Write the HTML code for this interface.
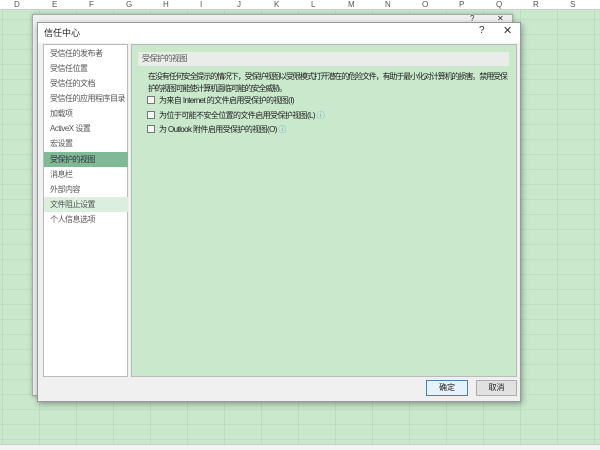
<!DOCTYPE html>
<html><head><meta charset="utf-8"><style>
*{margin:0;padding:0;box-sizing:border-box}
body{width:600px;height:450px;overflow:hidden;position:relative;font-family:"Liberation Sans","Noto Sans CJK SC",sans-serif;font-size:8px;color:#333;
background-color:#c9e8cc;
background-image:linear-gradient(to right,#bddcc0 1px,transparent 1px),linear-gradient(to bottom,#c0dfc3 1px,transparent 1px);
background-size:37px 100%,100% 15px;background-position:2px 0,0 4px}
.hdr{position:absolute;left:0;top:0;width:600px;height:10px;background:#fff;border-bottom:1px solid #ccc}
.hdr span{position:absolute;top:0;font-size:8px;color:#555}
.abs{position:absolute}
.item{position:absolute;left:44px;width:84px;height:15px;line-height:15px;padding-left:6px;font-size:8px;color:#555;white-space:nowrap;letter-spacing:-0.5px}
.cb{position:absolute;left:147px;width:8px;height:8px;border:1px solid #777;background:#f6f6f6}
.lbl{position:absolute;left:159px;font-size:8px;color:#222;white-space:nowrap;letter-spacing:-0.6px}
.btn{position:absolute;top:380px;height:16px;line-height:14px;text-align:center;font-size:8px;color:#222;background:#e1e1e1;border:1px solid #adadad}
.bottom{position:absolute;left:0;top:444px;width:600px;height:6px;background:#f3f3f3;border-top:1px solid #ccc}
</style></head><body>
<div class="hdr">
<span style="left:14px">D</span><span style="left:52px">E</span><span style="left:89px">F</span><span style="left:126px">G</span><span style="left:163px">H</span><span style="left:200px">I</span><span style="left:237px">J</span><span style="left:274px">K</span><span style="left:311px">L</span><span style="left:348px">M</span><span style="left:385px">N</span><span style="left:422px">O</span><span style="left:459px">P</span><span style="left:496px">Q</span><span style="left:533px">R</span><span style="left:570px">S</span>
</div>
<div class="abs" style="left:32px;top:14px;width:481px;height:382px;background:#f0f0f0;border:1px solid #aaa;box-shadow:0 0 4px rgba(0,0,0,.25)"></div>
<div class="abs" style="left:470px;top:14px;font-size:8px">?</div>
<div class="abs" style="left:497px;top:14px;font-size:8px">✕</div>
<div class="abs" style="left:37px;top:22px;width:484px;height:380px;background:#f0f0f0;border:1px solid #999;box-shadow:1px 2px 6px rgba(0,0,0,.35)"></div>
<div class="abs" style="left:38px;top:23px;width:482px;height:20px;background:#fff"></div>
<div class="abs" style="left:44px;top:26px;font-size:9px;color:#222">信任中心</div>
<div class="abs" style="left:479px;top:25px;font-size:10px;color:#333">?</div>
<div class="abs" style="left:503px;top:24px;font-size:11px;color:#333">✕</div>
<div class="abs" style="left:43px;top:44px;width:85px;height:333px;background:#fff;border:1px solid #bbb"></div>
<div class="item" style="top:46px">受信任的发布者</div>
<div class="item" style="top:61px">受信任位置</div>
<div class="item" style="top:76px">受信任的文档</div>
<div class="item" style="top:91px">受信任的应用程序目录</div>
<div class="item" style="top:106px">加载项</div>
<div class="item" style="top:121px">ActiveX 设置</div>
<div class="item" style="top:136px">宏设置</div>
<div class="item" style="top:152px;background:#7fb995;color:#334">受保护的视图</div>
<div class="item" style="top:167px">消息栏</div>
<div class="item" style="top:182px">外部内容</div>
<div class="item" style="top:197px;background:#dcefdf">文件阻止设置</div>
<div class="item" style="top:212px">个人信息选项</div>
<div class="abs" style="left:131px;top:44px;width:386px;height:333px;background:#c9e8cc;border:1px solid #bbb"></div>
<div class="abs" style="left:138px;top:52px;width:371px;height:14px;background:#e9ece9;padding-left:4px;line-height:14px;font-size:8px;color:#555;letter-spacing:-0.5px">受保护的视图</div>
<div class="abs" style="left:148px;top:71px;font-size:8px;line-height:12px;color:#222;white-space:nowrap;letter-spacing:-1.1px">在没有任何安全提示的情况下，受保护视图以受限模式打开潜在的危险文件，有助于最小化对计算机的损害。禁用受保<br>护的视图可能使计算机面临可能的安全威胁。</div>
<div class="cb" style="top:96px"></div><div class="lbl" style="top:95px">为来自 Internet 的文件启用受保护的视图(I)</div>
<div class="cb" style="top:111px"></div><div class="lbl" style="top:110px">为位于可能不安全位置的文件启用受保护视图(L) <span style="color:#6aa0d8">ⓘ</span></div>
<div class="cb" style="top:125px"></div><div class="lbl" style="top:124px">为 Outlook 附件启用受保护的视图(O) <span style="color:#6aa0d8">ⓘ</span></div>
<div class="btn" style="left:426px;width:42px;border:1px solid #4a7fb0;background:#e5f1fb">确定</div>
<div class="btn" style="left:476px;width:41px">取消</div>
<div class="bottom"></div>
</body></html>
